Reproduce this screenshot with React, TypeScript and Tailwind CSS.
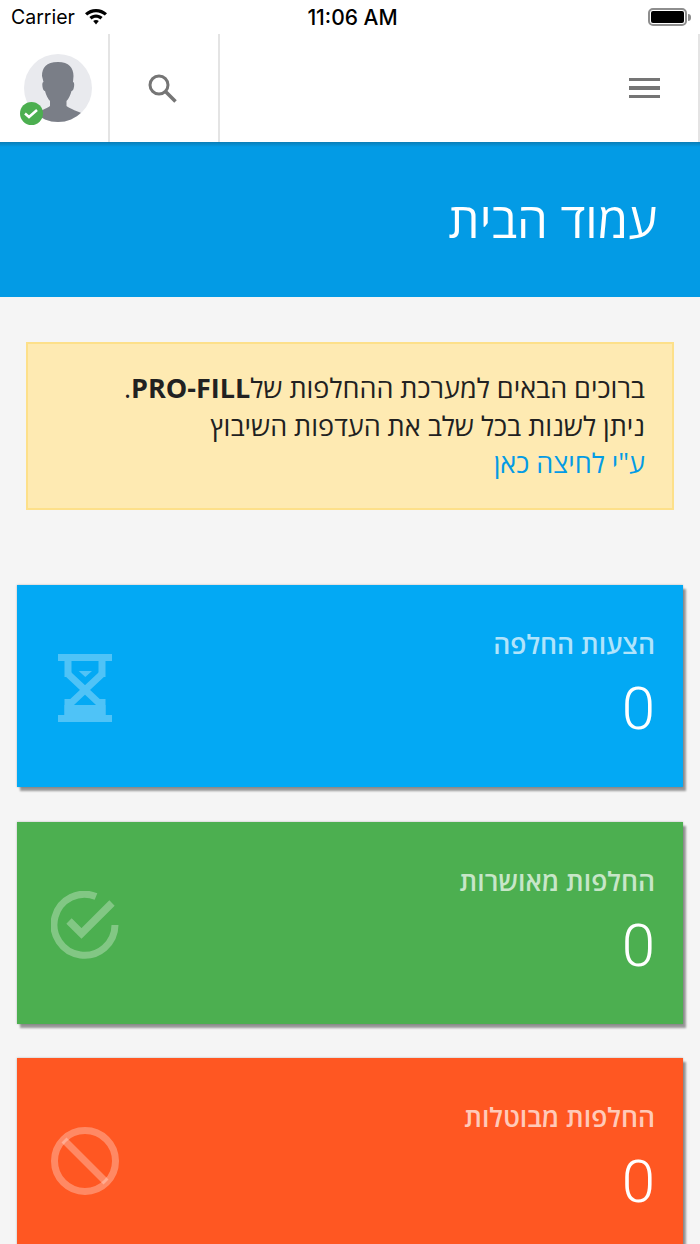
const font = { fontFamily: '"Open Sans", Roboto, sans-serif' };

function Wifi() {
  return (
    <svg width="24" height="18" viewBox="0 0 24 18" fill="#000">
      <path d="M12 1C7.800 1 4 2.600 1 5.200l2.200 2.400C5.600 5.500 8.700 4.200 12 4.200s6.400 1.300 8.800 3.400L23 5.200C20 2.600 16.200 1 12 1z" />
      <path d="M12 6.500c-2.500 0-4.800.9-6.600 2.500l2.200 2.400C8.800 10.400 10.300 9.800 12 9.800s3.200.6 4.400 1.600l2.200-2.400C16.800 7.400 14.500 6.500 12 6.500z" />
      <path d="M12 12c-1.100 0-2 .4-2.800 1l2.800 3.500 2.800-3.500c-.8-.6-1.700-1-2.800-1z" />
    </svg>
  );
}

function StatusBar() {
  return (
    <div className="flex h-[34px] items-center justify-between bg-white pl-[11px] pr-[9px] text-black" style={{ fontFamily: 'Inter, sans-serif' }}>
      <div className="flex w-[200px] items-center gap-[9px]">
        <span className="pt-[1px] text-[19.500px]">Carrier</span>
        <Wifi />
      </div>
      <span className="pl-[3px] pt-[2px] text-[21px] font-medium">11:06 AM</span>
      <div className="flex w-[200px] items-center justify-end">
        <div className="h-[18px] w-[39px] rounded-[5px] border-2 border-[#8e8e8e] bg-white p-[1px]">
          <div className="h-full w-full rounded-[2px] bg-black" />
        </div>
        <div className="ml-[1px] h-[7px] w-[3px] rounded-r-sm bg-[#8e8e8e]" />
      </div>
    </div>
  );
}

function Avatar() {
  return (
    <div className="relative h-[68px] w-[68px]">
      <div className="h-[68px] w-[68px] overflow-hidden rounded-full bg-[#e9eaee]">
        <svg width="68" height="68" viewBox="0 0 68 68" fill="#7a7e87">
          <path d="M18 22c0-8 4-14 16-14 11 0 15.500 6 15.500 14l-.5 6c1.500 0 1.500 4 .5 7-.6 1.500-1.500 2-2 2-1 4-3 8-5 10v5c3 3 12 5 18 9l-6 8H14l-6-8c6-4 15-6 18-9v-5c-2-2-4-6-5-10-.5 0-1.400-.5-2-2-1-3-1-7 .5-7z" />
        </svg>
      </div>
      <div className="absolute bottom-[-3px] left-[-4px] flex h-[23px] w-[23px] items-center justify-center rounded-full bg-[#4caf50]">
        <svg width="14" height="11" viewBox="0 0 14 11" fill="none" stroke="#fff" strokeWidth="2.500">
          <path d="M1 5.500l4 3.500L13 2" />
        </svg>
      </div>
    </div>
  );
}

function Header() {
  return (
    <div className="flex h-[108px] items-stretch bg-white">
      <div className="flex w-[110px] items-center justify-center border-r-2 border-[#e4e4e4] pl-[7px]">
        <Avatar />
      </div>
      <div className="flex w-[110px] items-center justify-center border-r-2 border-[#e4e4e4] pr-[4px]">
        <svg width="32" height="32" viewBox="0 0 32 32" fill="none" stroke="#757575">
          <circle cx="13" cy="13" r="9" strokeWidth="3" />
          <path d="M19.500 19.500L29.500 29.500" strokeWidth="3.500" />
        </svg>
      </div>
      <div className="flex flex-1 items-center justify-end border-r-2 border-[#e4e4e4] pr-[38px]">
        <div className="flex w-[31px] flex-col gap-[5px]">
          <div className="h-[3.500px] bg-[#757575]" />
          <div className="h-[3.500px] bg-[#757575]" />
          <div className="h-[3.500px] bg-[#757575]" />
        </div>
      </div>
    </div>
  );
}

function Hourglass() {
  return (
    <svg width="54" height="68" viewBox="0 0 54 68">
      <g opacity="0.3" fill="#fff">
        <rect x="0" y="0" width="54" height="7" />
        <rect x="0" y="61" width="54" height="7" />
        <rect x="6.500" y="7" width="7" height="16" />
        <rect x="40.500" y="7" width="7" height="16" />
        <rect x="6.500" y="45" width="7" height="16" />
        <rect x="40.500" y="45" width="7" height="16" />
        <rect x="6.500" y="51" width="41" height="10" />
        <path d="M10 20l32 30M44 20L12 50" stroke="#fff" strokeWidth="7" fill="none" />
        <path d="M20.700 17H34l-6.700 6z" />
      </g>
    </svg>
  );
}

function CheckCircle() {
  return (
    <svg width="68" height="68" viewBox="0 0 68 68" fill="none" stroke="#fff" strokeOpacity="0.3" strokeWidth="7">
      <path d="M64 34A30.500 30.500 0 1 1 45 5.500" />
      <path d="M18 30l12.500 12.500L61 12" strokeWidth="7.500" />
    </svg>
  );
}

function Ban() {
  return (
    <svg width="68" height="68" viewBox="0 0 68 68" fill="none" stroke="#fff" strokeOpacity="0.3" strokeWidth="7">
      <circle cx="34" cy="34" r="30.500" />
      <path d="M13 13l42 42" />
    </svg>
  );
}

function StatCard({ title, bg, icon }: { title: string; bg: string; icon: React.ReactNode }) {
  return (
    <div className={`flex h-[202px] items-start justify-between shadow-[3px_4px_2px_rgba(0,0,0,0.38),0_0_2px_rgba(0,0,0,0.25)] ${bg}`}>
      <div className="flex h-full flex-col items-end pr-[28px] pt-[41px]" style={font}>
        <span dir="rtl" className="text-[26.500px] font-semibold leading-[36px] text-white/70">{title}</span>
        <span className="mt-[12px] text-[60px] font-light leading-[70px] text-white" style={{ fontFamily: 'Roboto, sans-serif' }}>0</span>
      </div>
      <div className="order-first ml-[34px] mt-[69px] flex h-[68px] w-[68px] items-center justify-center">{icon}</div>
    </div>
  );
}

export default function App() {
  return (
    <div className="h-[1244px] w-[700px] overflow-hidden bg-[#f5f5f5]" style={font}>
      <StatusBar />
      <Header />
      <div className="flex h-[155px] items-center justify-end bg-[linear-gradient(#0a7db6,#039be5_5px)] pr-[43px]">
        <h1 dir="rtl" className="text-[49px] font-normal text-white">עמוד הבית</h1>
      </div>
      <div className="px-[26px] pt-[45px]">
        <div dir="rtl" className="h-[168px] border-2 border-[#fde08a] bg-[#feeab2] px-[27px] pt-[25px] text-[27px] leading-[37.500px] text-[#212121]">
          <div>ברוכים הבאים למערכת ההחלפות של<b>PRO-FILL</b>.</div>
          <div>ניתן לשנות בכל שלב את העדפות השיבוץ</div>
          <div className="text-[#039be5]">ע"י לחיצה כאן</div>
        </div>
      </div>
      <div className="flex flex-col gap-[34.500px] px-[17px] pt-[75px]">
        <StatCard title="הצעות החלפה" bg="bg-[#03a9f4]" icon={<Hourglass />} />
        <StatCard title="החלפות מאושרות" bg="bg-[#4caf50]" icon={<CheckCircle />} />
        <StatCard title="החלפות מבוטלות" bg="bg-[#ff5722]" icon={<Ban />} />
      </div>
    </div>
  );
}
